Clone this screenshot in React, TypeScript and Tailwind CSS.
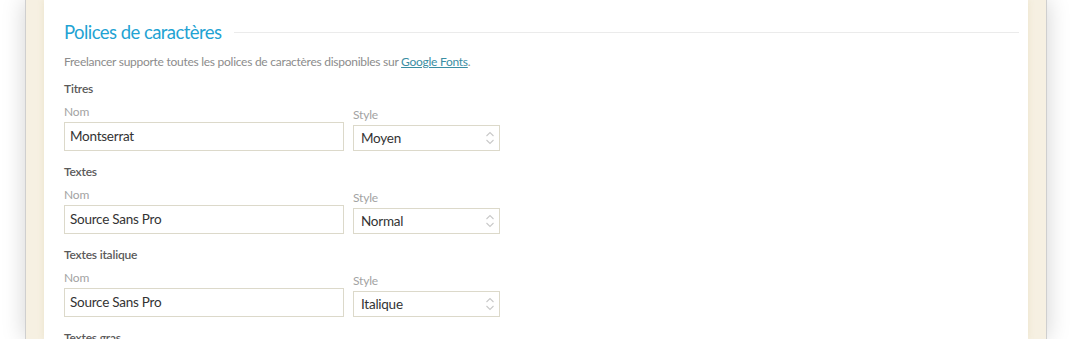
const fonts = [
  { title: "Titres", name: "Montserrat", style: "Moyen" },
  { title: "Textes", name: "Source Sans Pro", style: "Normal" },
  { title: "Textes italique", name: "Source Sans Pro", style: "Italique" },
  { title: "Textes gras", name: "Source Sans Pro", style: "Gras" },
];

function Chevrons() {
  return (
    <svg width="10" height="16" viewBox="0 0 10 16" fill="none" stroke="#c9c9c9" strokeWidth="1.1">
      <path d="M1.5 6 L5 2.5 L8.5 6" />
      <path d="M1.5 10 L5 13.5 L8.5 10" />
    </svg>
  );
}

function FontRow({ title, name, style }: { title: string; name: string; style: string }) {
  return (
    <div className="mt-[11px] first:mt-[7px]">
      <h4 className="text-[12px] leading-[20px] font-semibold tracking-[-0.2px] text-[#5a5a5a]">{title}</h4>
      <div className="mt-[2px] flex items-end gap-[9px]">
        <div className="w-[280px]">
          <label className="block text-[12px] leading-[21px] tracking-[-0.2px] text-[#a3a3a3]">Nom</label>
          <div className="h-[29px] border border-[#dcd9ca] bg-white px-[5px] text-[13.5px] leading-[27px] tracking-[-0.25px] text-[#333]">
            {name}
          </div>
        </div>
        <div className="w-[147px]">
          <label className="block text-[12px] leading-[20px] tracking-[-0.2px] text-[#a3a3a3]">Style</label>
          <div className="flex h-[26px] items-center justify-between border border-[#dcd9ca] bg-white pl-[7px] pr-[4px] text-[13.5px] tracking-[-0.25px] text-[#333]">
            <span>{style}</span>
            <Chevrons />
          </div>
        </div>
      </div>
    </div>
  );
}

export default function App() {
  return (
    <div
      className="flex h-[339px] w-full overflow-hidden bg-white px-[25px]"
      style={{ fontFamily: '"Source Sans Pro", Lato, "Noto Sans", sans-serif' }}
    >
      <div className="flex flex-1 border-x border-[#cfcfcf] bg-[#f6f0e2] px-[18px] shadow-[0_0_22px_rgba(0,0,0,0.18)]">
        <div className="flex-1 bg-white pl-[20px] pr-[9px] pt-[18px] shadow-[0_0_6px_rgba(235,225,200,0.9)]">
          <div className="flex items-center gap-[12px]">
            <h2 className="text-[18.5px] leading-[28px] tracking-[-0.55px] text-[#1fa3d3]">Polices de caractères</h2>
            <div className="h-px flex-1 bg-[#ebebeb]" />
          </div>
          <p className="mt-[6px] text-[12px] leading-[20px] tracking-[-0.27px] text-[#8c8c8c]">
            Freelancer supporte toutes les polices de caractères disponibles sur{" "}
            <a href="#" className="text-[#3b8ea3] underline">
              Google Fonts
            </a>
            .
          </p>
          <div>
            {fonts.map((f) => (
              <FontRow key={f.title} {...f} />
            ))}
          </div>
        </div>
      </div>
    </div>
  );
}
